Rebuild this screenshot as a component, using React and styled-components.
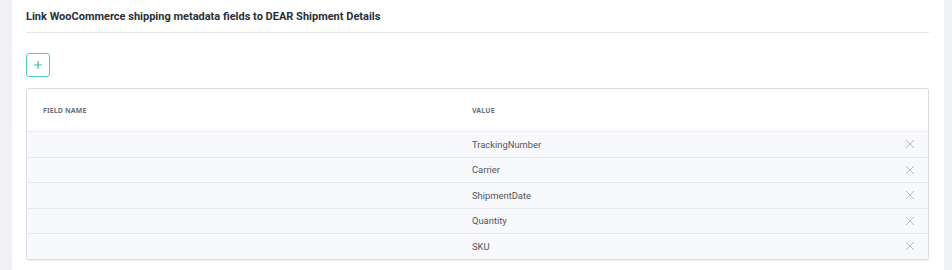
import styled, { createGlobalStyle } from 'styled-components';

const GlobalStyle = createGlobalStyle`
  html, body {
    margin: 0;
    padding: 0;
    background: #f0f1f4;
    font-family: Roboto, "Noto Sans", sans-serif;
  }
`;

const Page = styled.div`
  display: flex;
  padding: 0 8px 0 12px;
  height: 270px;
  box-sizing: border-box;
`;

const Panel = styled.div`
  flex: 1;
  background: #fff;
  padding: 0 15px 0 14px;
`;

const Heading = styled.div`
  display: flex;
  align-items: center;
  height: 32px;
  border-bottom: 1px solid #e6e7ea;
  font-size: 11px;
  font-weight: 700;
  color: #2b2f38;
`;

const Toolbar = styled.div`
  display: flex;
  padding: 20px 0 11px;
`;

const AddButton = styled.button`
  width: 24px;
  height: 24px;
  padding: 0;
  display: flex;
  align-items: center;
  justify-content: center;
  background: #fff;
  border: 1px solid #4fcfc4;
  border-radius: 3px;
  color: #35bfb3;
  cursor: pointer;
`;

const Table = styled.div`
  border: 1px solid #d9dce2;
  border-radius: 2px;
  box-shadow: 0 1px 1px rgba(0, 0, 0, 0.06);
  overflow: hidden;
`;

const Row = styled.div`
  display: grid;
  grid-template-columns: 445px 1fr 36px;
  align-items: center;
  height: ${(p) => (p.$head ? '42px' : '25.5px')};
  background: ${(p) => (p.$head ? '#fff' : '#f8f9fc')};
  border-top: ${(p) => (p.$head ? 'none' : '1px solid #e8eaef')};
  box-sizing: border-box;
`;

const HeadCell = styled.div`
  padding-left: ${(p) => p.$pad || '0'};
  font-family: "Noto Sans", sans-serif;
  font-size: 7px;
  font-weight: 700;
  color: #6d717a;
  letter-spacing: 0.1px;
  text-transform: uppercase;
`;

const Cell = styled.div`
  font-size: 9.4px;
  color: #50545c;
`;

const Remove = styled.button`
  display: flex;
  align-items: center;
  justify-content: center;
  padding: 0;
  background: none;
  border: none;
  color: #b9bcc2;
  cursor: pointer;
`;

const PlusIcon = () => (
  <svg width="10" height="10" viewBox="0 0 10 10">
    <path d="M5 1v8M1 5h8" stroke="currentColor" strokeWidth="1.2" />
  </svg>
);

const CrossIcon = () => (
  <svg width="10" height="10" viewBox="0 0 10 10">
    <path d="M1 1l8 8M9 1l-8 8" stroke="currentColor" strokeWidth="1" />
  </svg>
);

const values = ['TrackingNumber', 'Carrier', 'ShipmentDate', 'Quantity', 'SKU'];

export default function App() {
  return (
    <>
      <GlobalStyle />
      <Page>
        <Panel>
          <Heading>Link WooCommerce shipping metadata fields to DEAR Shipment Details</Heading>
          <Toolbar>
            <AddButton aria-label="Add">
              <PlusIcon />
            </AddButton>
          </Toolbar>
          <Table>
            <Row $head>
              <HeadCell $pad="16px">Field Name</HeadCell>
              <HeadCell>Value</HeadCell>
              <div />
            </Row>
            {values.map((v) => (
              <Row key={v}>
                <div />
                <Cell>{v}</Cell>
                <Remove aria-label="Remove">
                  <CrossIcon />
                </Remove>
              </Row>
            ))}
          </Table>
        </Panel>
      </Page>
    </>
  );
}
